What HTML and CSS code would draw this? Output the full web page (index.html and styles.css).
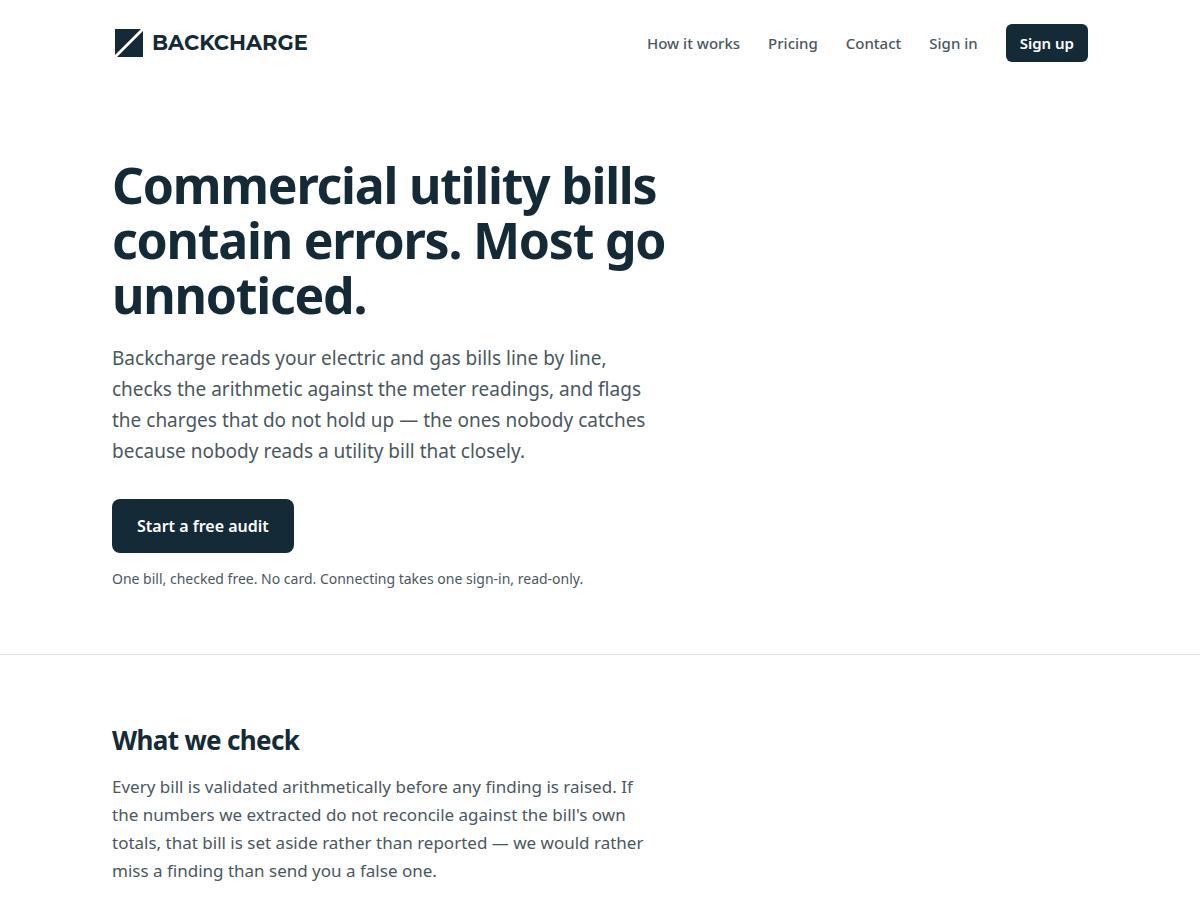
FILE: index.html
```html
<!DOCTYPE html>
<html lang="en">
<head>
    <meta charset="UTF-8">
    <meta name="viewport" content="width=device-width, initial-scale=1.0">
    <title>Backcharge</title>
    <link rel="stylesheet" href="styles.css">
</head>
<body>
    <header class="wrap site-header">
        <a href="#" class="brand">
            <svg class="brand-mark" viewBox="0 0 30 30" aria-hidden="true">
                <path d="M1 1H27L1 27Z"/>
                <path d="M29 3V29H3Z"/>
            </svg>
            <span>BACKCHARGE</span>
        </a>
        <nav class="site-nav">
            <a href="#how">How it works</a>
            <a href="#pricing">Pricing</a>
            <a href="#contact">Contact</a>
            <a href="#signin">Sign in</a>
            <a href="#signup" class="btn btn-small">Sign up</a>
        </nav>
    </header>

    <main>
        <section class="hero">
            <div class="wrap">
                <h1>Commercial utility bills contain errors. Most go unnoticed.</h1>
                <p class="lede">Backcharge reads your electric and gas bills line by line, checks the arithmetic against the meter readings, and flags the charges that do not hold up — the ones nobody catches because nobody reads a utility bill that closely.</p>
                <a href="#signup" class="btn btn-large">Start a free audit</a>
                <p class="note">One bill, checked free. No card. Connecting takes one sign-in, read-only.</p>
            </div>
        </section>

        <section class="checks" id="how">
            <div class="wrap">
                <h2>What we check</h2>
                <p>Every bill is validated arithmetically before any finding is raised. If the numbers we extracted do not reconcile against the bill's own totals, that bill is set aside rather than reported — we would rather miss a finding than send you a false one.</p>
            </div>
        </section>
    </main>
</body>
</html>
```
FILE: styles.css
```css
:root {
    --ink: #152a37;
    --body: #4a5761;
    --line: #e0e3e6;
}

* {
    margin: 0;
    padding: 0;
    box-sizing: border-box;
}

body {
    font-family: "Noto Sans", sans-serif;
    font-size: 17px;
    line-height: 28px;
    color: var(--body);
    background: #fff;
}

a {
    color: inherit;
    text-decoration: none;
}

.wrap {
    max-width: 1024px;
    margin: 0 auto;
    padding: 0 24px;
}

.site-header {
    display: flex;
    align-items: center;
    justify-content: space-between;
    padding-top: 24px;
    padding-bottom: 24px;
}

.brand {
    display: flex;
    align-items: center;
    gap: 8px;
    padding-left: 2px;
    font-family: Montserrat, Inter, sans-serif;
    font-size: 21px;
    font-weight: 700;
    color: var(--ink);
}

.brand-mark {
    width: 30px;
    height: 30px;
    fill: var(--ink);
}

.site-nav {
    display: flex;
    align-items: center;
    gap: 28px;
    font-size: 15px;
    font-weight: 500;
    line-height: 24px;
}

.btn {
    display: inline-block;
    background: var(--ink);
    color: #fff;
    font-weight: 600;
}

.btn-small {
    padding: 7px 14px;
    border-radius: 6px;
}

.btn-large {
    padding: 14px 25px;
    border-radius: 8px;
    font-size: 16px;
    line-height: 26px;
}

.hero {
    padding: 72px 0 64px;
    border-bottom: 1px solid var(--line);
}

h1,
h2 {
    font-weight: 700;
    letter-spacing: -0.025em;
    color: var(--ink);
}

h1 {
    max-width: 600px;
    margin-bottom: 20px;
    font-size: 50px;
    line-height: 55px;
}

.lede {
    max-width: 544px;
    margin-bottom: 32px;
    font-size: 19px;
    line-height: 31px;
}

.note {
    margin-top: 15px;
    font-size: 14px;
    line-height: 22px;
}

.checks {
    padding: 64px 0;
}

h2 {
    margin-bottom: 12px;
    font-size: 26px;
    line-height: 42px;
}

.checks p {
    max-width: 544px;
}
```
